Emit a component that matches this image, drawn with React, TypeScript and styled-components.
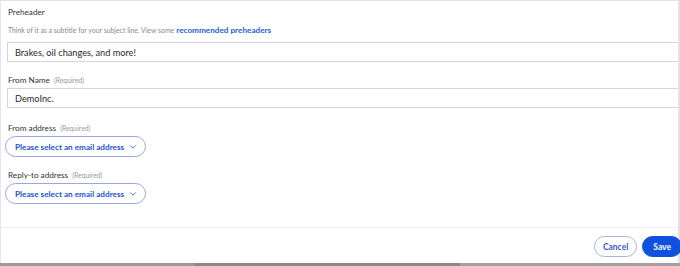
import { createGlobalStyle, styled } from 'styled-components';
import { ChevronDown } from 'lucide-react';

const GlobalStyle = createGlobalStyle`
  html, body {
    margin: 0;
    padding: 0;
    background: #ffffff;
    font-family: Lato, "Open Sans", sans-serif;
  }
  * {
    box-sizing: border-box;
  }
`

const Page = styled.div`
  width: 680px;
  height: 266px;
  display: flex;
  flex-direction: column;
  overflow: hidden;
`

const Panel = styled.div`
  flex: 1;
  display: flex;
  flex-direction: column;
  border-top: 1px solid #e2e2e2;
  border-left: 1px solid #e6e6e6;
  border-right: 2px solid #e2e2e2;
`

const Form = styled.div`
  flex: 1;
  padding: 5px 0 0 6px;
  display: flex;
  flex-direction: column;
  border-bottom: 1px solid #f0f0f0;
`

const Field = styled.div<{ $top?: number }>`
  display: flex;
  flex-direction: column;
  margin-top: ${({ $top }) => $top ?? 0}px;
`

const Label = styled.div`
  font-size: 8.2px;
  color: #353535;
  line-height: 12px;
  height: 12px;
  padding-left: 1px;

  small {
    font-size: 6.8px;
    color: #9a9a9a;
    margin-left: 2px;
  }
`

const Hint = styled.div`
  font-size: 6.9px;
  color: #8a8a8a;
  margin-top: 7px;
  padding-left: 1px;
  line-height: 10px;
  height: 10px;
  white-space: nowrap;

  a {
    color: #1f5fd4;
    font-weight: 700;
    font-size: 8.2px;
    text-decoration: none;
    margin-left: 2px;
  }
`

const TextBox = styled.div<{ $top: number }>`
  height: 20px;
  margin-top: ${({ $top }) => $top}px;
  border: 1px solid #d6d6d6;
  border-right: none;
  display: flex;
  align-items: center;
  padding-left: 7px;
  font-size: 9.2px;
  color: #2a2a2a;
`

const Select = styled.button`
  margin-top: 2px;
  width: 141px;
  height: 21px;
  border: 1px solid #9aa6ea;
  border-radius: 11px;
  background: #ffffff;
  display: flex;
  align-items: center;
  justify-content: space-between;
  padding: 0 7px 0 9px;
  margin-left: -2px;
  font-family: inherit;
  font-size: 8.2px;
  font-weight: 700;
  color: #2452cf;
  cursor: pointer;
`

const Footer = styled.div`
  flex: 0 0 35px;
  display: flex;
  justify-content: flex-end;
  align-items: flex-start;
  gap: 5px;
  padding-top: 8px;
`

const Button = styled.button<{ $primary?: boolean }>`
  height: 21px;
  border-radius: 11px;
  font-family: inherit;
  font-size: 8.5px;
  font-weight: 700;
  padding: 0 ${({ $primary }) => ($primary ? '10px' : '8px')};
  border: 1px solid ${({ $primary }) => ($primary ? '#0f50e0' : '#a7b2ea')};
  background: ${({ $primary }) => ($primary ? '#0f50e0' : '#ffffff')};
  color: ${({ $primary }) => ($primary ? '#ffffff' : '#3a5bc9')};
  margin-right: ${({ $primary }) => ($primary ? '-4px' : '0')};
`

const Strip = styled.div`
  height: 3px;
  background: linear-gradient(to right, #9a9a9a 0 195px, #8a8a8a 195px 460px, #a0a0a0 460px);
`

export default function App() {
  return (
    <Page>
      <GlobalStyle />
      <Panel>
        <Form>
          <Field>
            <Label>Preheader</Label>
            <Hint>
              Think of it as a subtitle for your subject line. View some
              <a href="#">recommended preheaders</a>
            </Hint>
            <TextBox $top={7}>Brakes, oil changes, and more!</TextBox>
          </Field>
          <Field $top={12}>
            <Label>From Name <small>(Required)</small></Label>
            <TextBox $top={2}>DemoInc.</TextBox>
          </Field>
          <Field $top={14}>
            <Label>From address <small>(Required)</small></Label>
            <Select>
              Please select an email address
              <ChevronDown size={10} strokeWidth={2} />
            </Select>
          </Field>
          <Field $top={12}>
            <Label>Reply-to address <small>(Required)</small></Label>
            <Select>
              Please select an email address
              <ChevronDown size={10} strokeWidth={2} />
            </Select>
          </Field>
        </Form>
        <Footer>
          <Button>Cancel</Button>
          <Button $primary>Save</Button>
        </Footer>
      </Panel>
      <Strip />
    </Page>
  )
}
